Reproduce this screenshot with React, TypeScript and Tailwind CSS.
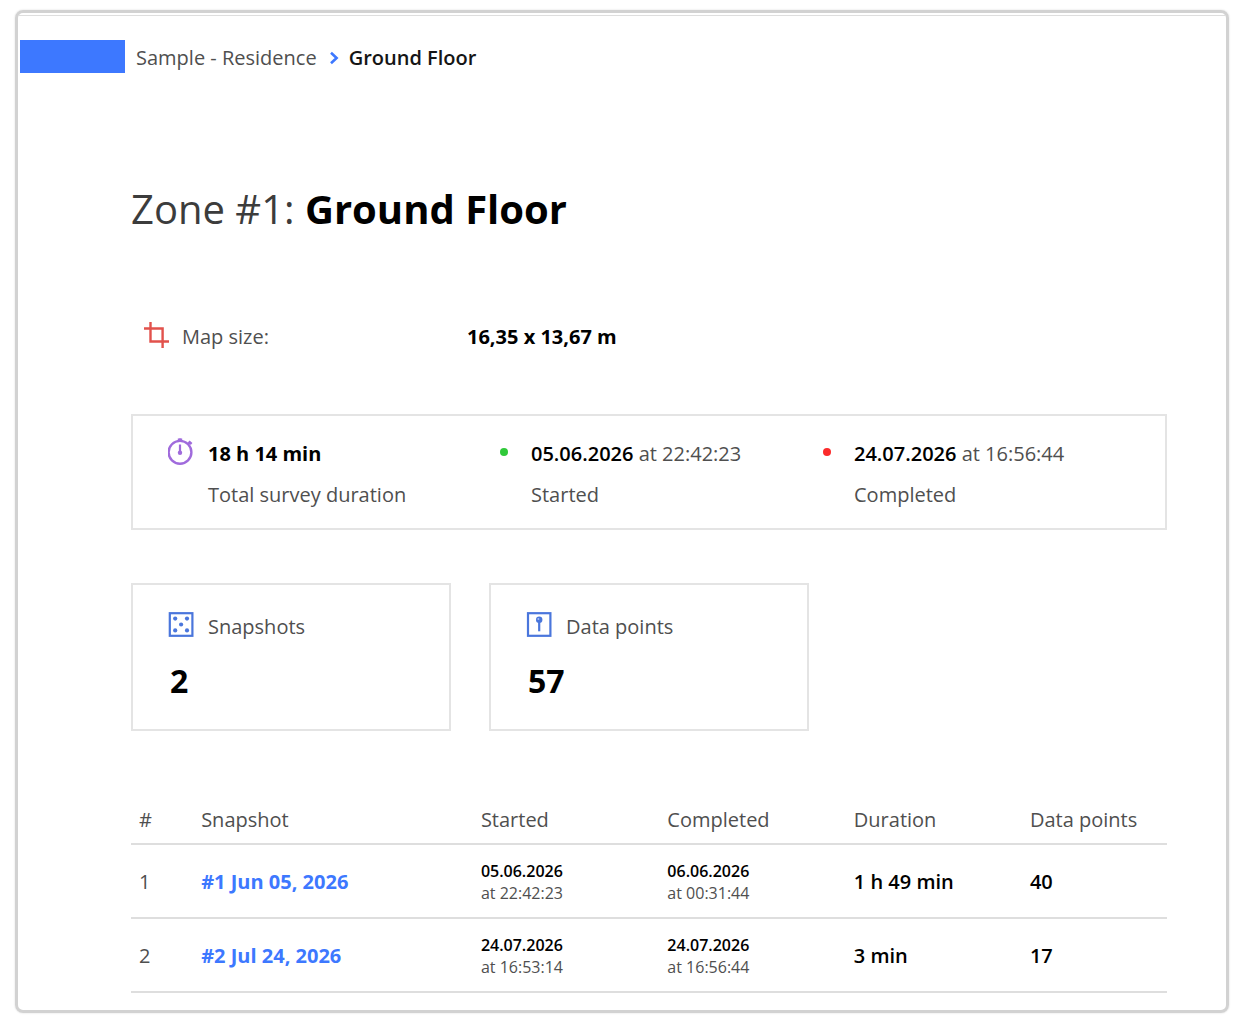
import React from 'react';

interface Stamp {
  date: string;
  time: string;
}

interface Snapshot {
  id: number;
  title: string;
  started: Stamp;
  completed: Stamp;
  duration: string;
  points: number;
}

const snapshots: Snapshot[] = [
  {
    id: 1,
    title: '#1 Jun 05, 2026',
    started: { date: '05.06.2026', time: '22:42:23' },
    completed: { date: '06.06.2026', time: '00:31:44' },
    duration: '1 h 49 min',
    points: 40,
  },
  {
    id: 2,
    title: '#2 Jul 24, 2026',
    started: { date: '24.07.2026', time: '16:53:14' },
    completed: { date: '24.07.2026', time: '16:56:44' },
    duration: '3 min',
    points: 17,
  },
];

const CropIcon = () => (
  <svg className="w-[26px] h-7 shrink-0" viewBox="0 0 26 28" fill="none" stroke="#e2524c" strokeWidth="2.4">
    <path d="M6.5 1V20.5H25M0 7.5H18.6V27" />
  </svg>
);

const TimerIcon = () => (
  <svg className="w-[26px] h-7 shrink-0" viewBox="0 0 26 28" fill="none" stroke="#a06bdc" strokeWidth="2.4">
    <circle cx="12" cy="14.3" r="11.4" />
    <path d="M12 0.3V3.3M9.8 1.6H14.2M20.3 6L22.6 3.8M20.8 3.4L23.6 6" />
    <path d="M12 6.5V15" strokeWidth="2.2" />
    <circle cx="12" cy="14.8" r="2.2" fill="#a06bdc" stroke="none" />
  </svg>
);

const DiceIcon = () => (
  <svg className="w-[26px] h-7 shrink-0" viewBox="0 0 26 28" fill="#4a76dc">
    <rect x="1.8" y="2.2" width="22.6" height="22.6" fill="none" stroke="#4a76dc" strokeWidth="2.2" />
    <circle cx="7.2" cy="7.6" r="2.1" />
    <circle cx="19" cy="7.6" r="2.1" />
    <circle cx="13.1" cy="13.5" r="2.1" />
    <circle cx="7.2" cy="19.4" r="2.1" />
    <circle cx="19" cy="19.4" r="2.1" />
  </svg>
);

const PinIcon = () => (
  <svg className="w-[26px] h-7 shrink-0" viewBox="0 0 26 28" fill="none" stroke="#4a76dc">
    <rect x="2" y="2.2" width="22.4" height="22.6" strokeWidth="2.2" />
    <circle cx="13.2" cy="8.8" r="3.2" fill="#4a76dc" stroke="none" />
    <circle cx="12.4" cy="8.1" r="1" fill="#a9bff3" stroke="none" />
    <path d="M13.2 10.8V20.3" strokeWidth="2.2" />
  </svg>
);

const Dot = ({ className }: { className: string }) => (
  <span className="flex w-[26px] h-7 shrink-0 items-center justify-center">
    <span className={`size-2 rounded-full ${className}`}></span>
  </span>
);

function SummaryItem({ icon, label, children }: { icon: React.ReactNode; label: string; children: React.ReactNode }) {
  return (
    <div className="flex gap-[14px]">
      {icon}
      <div className="whitespace-nowrap">
        <div className="leading-8">{children}</div>
        <div className="mt-[9px] leading-8">{label}</div>
      </div>
    </div>
  );
}

function CountCard({ icon, label, value }: { icon: React.ReactNode; label: string; value: number }) {
  return (
    <div className="w-80 border-2 border-[#e4e4e4] px-[35px] pt-[26px] pb-[25px]">
      <div className="flex gap-[14px]">
        {icon}
        <div className="leading-8">{label}</div>
      </div>
      <div className="mt-[15px] pl-0.5 text-[32px] leading-[46px] font-bold text-black">{value}</div>
    </div>
  );
}

function StampCell({ stamp }: { stamp: Stamp }) {
  return (
    <td className="px-2 pt-0.5 text-base leading-[22px]">
      <div className="font-semibold text-black">{stamp.date}</div>
      <div>at {stamp.time}</div>
    </td>
  );
}

export default function App() {
  return (
    <div className="bg-white pt-2.5 pr-[11px] pb-[11px] pl-[15px] font-['Open_Sans',sans-serif] text-xl text-[#4f4f4f]">
      <div className="rounded-lg border-3 border-[#d2d2d2] pt-0.5 pb-[17px] shadow-[0_0_2px_#d8d8d8]">
        <hr className="border-[#dedede]" />

        <nav aria-label="Breadcrumb" className="mt-[23px] ml-0.5 flex items-center leading-8">
          <div className="mr-[11px] h-[33px] w-[105px] bg-[#3d78ff]"></div>
          <a href="#residence" className="pt-[3px]">Sample - Residence</a>
          <svg className="mt-0.5 mr-2.5 ml-3 h-3.5 w-2.5" viewBox="0 0 10 14" fill="none" stroke="#3d78ff" strokeWidth="2.6">
            <path d="M2 1.8L7.6 7L2 12.2" />
          </svg>
          <span className="pt-[3px] font-semibold text-[#151515]">Ground Floor</span>
        </nav>

        <main className="pr-[59px] pl-[113px]">
          <h1 className="mt-[106px] text-[40px] leading-[58px] text-[#3c3c3c]">
            Zone #1: <strong className="font-bold text-black">Ground Floor</strong>
          </h1>

          <dl className="mt-[83px] flex">
            <dt className="flex w-[336px] gap-3 pl-[13px] leading-8">
              <CropIcon />
              Map size:
            </dt>
            <dd className="leading-8 font-bold text-black">16,35 x 13,67 m</dd>
          </dl>

          <section className="mt-[61px] grid grid-cols-3 border-2 border-[#e4e4e4] pt-[22px] pr-7 pb-[17px] pl-[35px]">
            <SummaryItem icon={<TimerIcon />} label="Total survey duration">
              <b className="font-bold text-black">18 h 14 min</b>
            </SummaryItem>
            <SummaryItem icon={<Dot className="bg-[#30c93a]" />} label="Started">
              <b className="font-semibold text-black">05.06.2026</b> at 22:42:23
            </SummaryItem>
            <SummaryItem icon={<Dot className="bg-[#fb2b2b]" />} label="Completed">
              <b className="font-semibold text-black">24.07.2026</b> at 16:56:44
            </SummaryItem>
          </section>

          <section className="mt-[53px] flex gap-[38px]">
            <CountCard icon={<DiceIcon />} label="Snapshots" value={2} />
            <CountCard icon={<PinIcon />} label="Data points" value={57} />
          </section>

          <table className="mt-[65px] w-full table-fixed text-left whitespace-nowrap">
            <thead>
              <tr className="h-12 border-b-2 border-[#dedede]">
                <th className="w-[6%] px-2 font-normal">#</th>
                <th className="w-[27%] px-2 font-normal">Snapshot</th>
                <th className="w-[18%] px-2 font-normal">Started</th>
                <th className="w-[18%] px-2 font-normal">Completed</th>
                <th className="w-[17%] px-2 font-normal">Duration</th>
                <th className="w-[14%] px-2 font-normal">Data points</th>
              </tr>
            </thead>
            <tbody>
              {snapshots.map((item) => (
                <tr key={item.id} className="h-[74px] border-b-2 border-[#dedede]">
                  <td className="px-2 pt-0.5">{item.id}</td>
                  <td className="px-2 pt-0.5">
                    <a href={`#snapshot-${item.id}`} className="font-bold text-[#3d78ff]">{item.title}</a>
                  </td>
                  <StampCell stamp={item.started} />
                  <StampCell stamp={item.completed} />
                  <td className="px-2 pt-0.5 font-semibold text-black">{item.duration}</td>
                  <td className="px-2 pt-0.5 font-semibold text-black">{item.points}</td>
                </tr>
              ))}
            </tbody>
          </table>
        </main>
      </div>
    </div>
  );
}
